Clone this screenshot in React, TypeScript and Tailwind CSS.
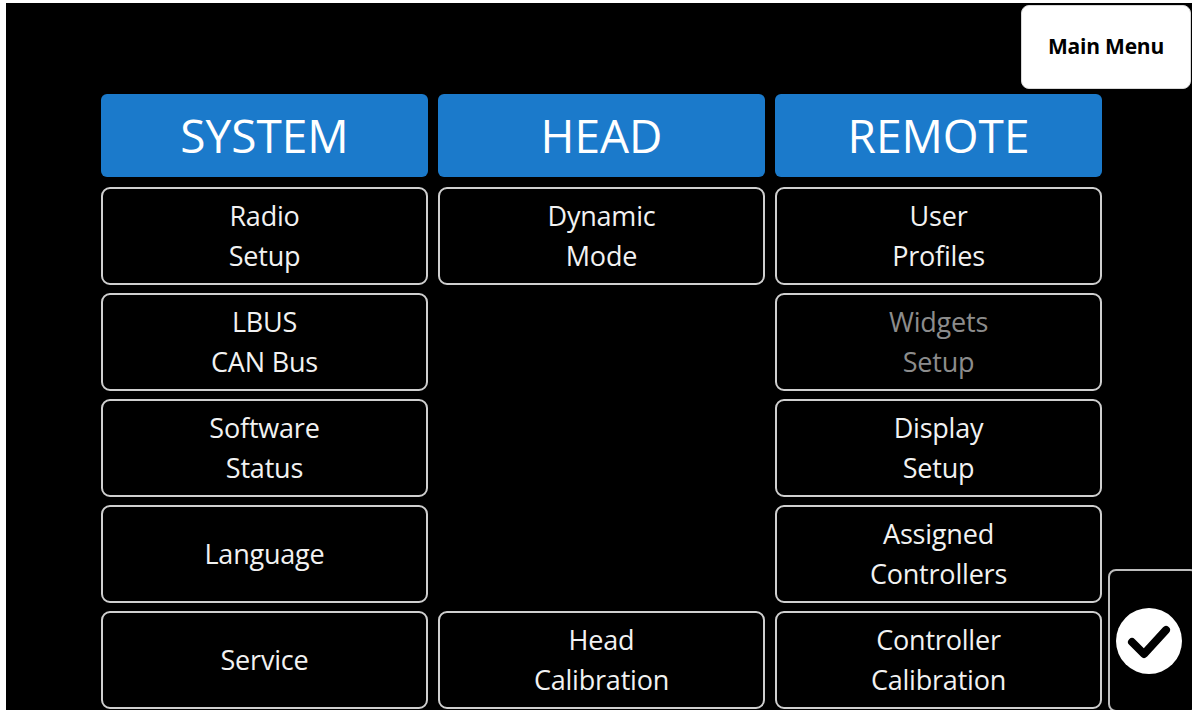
import React from "react";

const font = { fontFamily: '"Open Sans", "Noto Sans", sans-serif' };

function Cell({ lines, dim }: { lines: string[]; dim?: boolean }) {
  return (
    <div
      className={`h-[98px] rounded-[9px] border-2 border-[#cfcfcf] bg-black flex flex-col items-center justify-center text-[27px] leading-[40px] tracking-[-0.2px] ${dim ? "text-[#8c8c8c]" : "text-[#f2f2f2]"}`}
    >
      {lines.map((l) => (
        <div key={l}>{l}</div>
      ))}
    </div>
  );
}

function Header({ label }: { label: string }) {
  return (
    <div className="h-[83px] rounded-[6px] bg-[#1b7acb] flex items-center justify-center text-white text-[46px]">
      {label}
    </div>
  );
}

export default function App() {
  const system = [["Radio", "Setup"], ["LBUS", "CAN Bus"], ["Software", "Status"], ["Language"], ["Service"]];
  const head: (string[] | null)[] = [["Dynamic", "Mode"], null, null, null, ["Head", "Calibration"]];
  const remote = [["User", "Profiles"], ["Widgets", "Setup"], ["Display", "Setup"], ["Assigned", "Controllers"], ["Controller", "Calibration"]];
  return (
    <div className="w-[1192px] h-[710px] bg-white overflow-hidden pl-[6px] pt-[3px]" style={font}>
      <div className="w-full h-full bg-black flex flex-col">
        <div className="h-[91px] flex justify-end items-start pt-[2px] pr-[1px]">
          <div className="w-[170px] h-[84px] bg-white rounded-[8px] border border-[#d8d8d8] flex items-center justify-center text-black font-bold text-[21px] tracking-[-0.2px]">
            Main Menu
          </div>
        </div>
        <div className="flex flex-1 pl-[95px]">
          <div className="grid grid-cols-[327px_327px_327px] gap-x-[10px]">
            <div className="flex flex-col gap-[10px]">
              <Header label="SYSTEM" />
              <div className="flex flex-col gap-[8px]">
                {system.map((l, i) => (
                  <Cell key={i} lines={l} />
                ))}
              </div>
            </div>
            <div className="flex flex-col gap-[10px]">
              <Header label="HEAD" />
              <div className="flex flex-col gap-[8px]">
                {head.map((l, i) => (l ? <Cell key={i} lines={l} /> : <div key={i} className="h-[98px]" />))}
              </div>
            </div>
            <div className="flex flex-col gap-[10px]">
              <Header label="REMOTE" />
              <div className="flex flex-col gap-[8px]">
                {remote.map((l, i) => (
                  <Cell key={i} lines={l} dim={i === 1} />
                ))}
              </div>
            </div>
          </div>
          <div className="flex-1 flex flex-col justify-end pl-[6px]">
            <div className="h-[143px] w-[90px] mb-[-2px] rounded-[8px] border-2 border-[#bdbdbd] bg-black flex items-center pl-[5px]">
              <svg width="68" height="68" viewBox="0 0 68 68">
                <circle cx="34" cy="34" r="33" fill="white" />
                <path d="M17 35 L29 47 L51 23" fill="none" stroke="black" strokeWidth="8" strokeLinecap="round" strokeLinejoin="round" />
              </svg>
            </div>
          </div>
        </div>
      </div>
    </div>
  );
}
